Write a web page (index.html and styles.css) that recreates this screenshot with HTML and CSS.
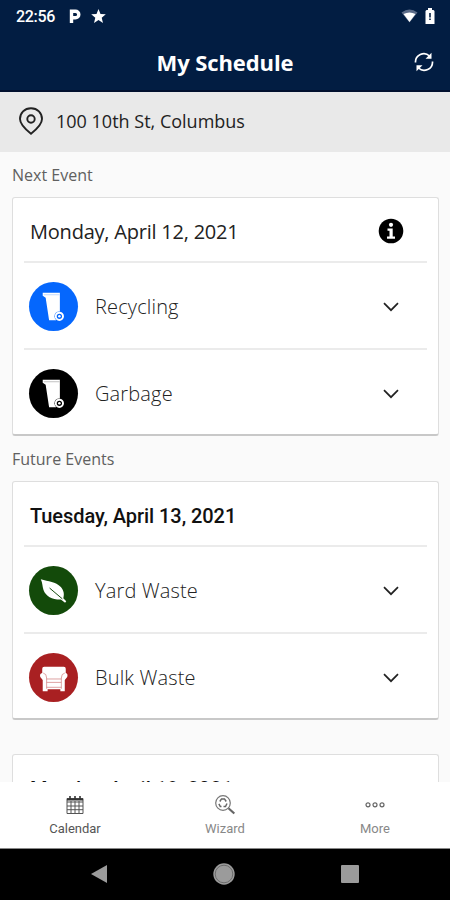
FILE: index.html
```html
<!DOCTYPE html>
<html lang="en">
<head>
  <meta charset="utf-8">
  <meta name="viewport" content="width=device-width, initial-scale=1">
  <title>My Schedule</title>
  <link rel="stylesheet" href="styles.css">
</head>
<body>
<svg class="symbols" width="0" height="0">
  <symbol id="bin" viewBox="0 0 50 50">
    <path d="M14 11h17.500v20l-4 8h-7l-3.500-23-3-2z" fill="#fff"/>
    <path d="M15 13h16" stroke="currentColor" stroke-width=".5" opacity=".5"/>
    <circle cx="31" cy="35" r="5" fill="currentColor"/>
    <circle cx="31" cy="35" r="3.700" fill="none" stroke="#fff" stroke-width="2"/>
    <circle cx="31" cy="35" r="1.300" fill="#fff"/>
  </symbol>
  <symbol id="chevron" viewBox="0 0 16 10">
    <path d="M1 1.200l7 7 7-7" fill="none" stroke="#222" stroke-width="1.700"/>
  </symbol>
</svg>

<div class="app">
  <header class="header">
    <div class="status">
      <span class="time">22:56</span>
      <svg class="parking" width="12" height="14" viewBox="0 0 12 14"><path d="M2.500 14V2.200h4a3.300 3.300 0 0 1 0 6.600H3.500" fill="none" stroke="#fff" stroke-width="3.400"/></svg>
      <svg class="star" width="15" height="14" viewBox="0 0 15 14"><path d="M7.500 0l2 4.900 5.300.4-4.100 3.400 1.300 5.200-4.500-2.800L3 13.900l1.300-5.200L.2 5.300l5.300-.4z" fill="#fff"/></svg>
      <svg class="wifi" width="17" height="14" viewBox="0 0 17 14"><path d="M.5 3.500q8-6 16 0l-8 10z" fill="#5b6b88"/><path d="M2.500 5q6-3.200 12 0l-6 8z" fill="#fff"/></svg>
      <svg class="battery" width="10" height="16" viewBox="0 0 10 16"><path d="M3 0h4v2h1.500l1 1v13H.5V3l1-1H3z" fill="#fff"/><path d="M5 5v4.500M5 10.500v1.500" stroke="#021d42" stroke-width="1.600"/></svg>
    </div>
    <div class="titlebar">
      <h1>My Schedule</h1>
      <svg class="refresh" width="20" height="20" viewBox="0 0 20 20">
        <path d="M1.500 10.500A8.300 8.300 0 0 1 15.500 4M18.500 9.500A8.300 8.300 0 0 1 4.500 16" fill="none" stroke="#fff" stroke-width="1.700"/>
        <path d="M17.500 .8v6h-6zM2.500 19.200v-6h6z" fill="#fff"/>
      </svg>
    </div>
  </header>

  <div class="address">
    <svg width="26" height="28" viewBox="0 0 26 28">
      <path d="M13 1.200C6.500 1.200 2 6 2 12c0 5.500 5 10 11 14.700C19 22 24 17.500 24 12 24 6 19.500 1.200 13 1.200z" fill="none" stroke="#222" stroke-width="1.900"/>
      <circle cx="13" cy="12" r="3.700" fill="none" stroke="#222" stroke-width="1.900"/>
    </svg>
    <span>100 10th St, Columbus</span>
  </div>

  <main class="content">
    <h2 class="label">Next Event</h2>
    <section class="card">
      <div class="date"><span class="day">Monday, April 12, 2021</span>
        <svg class="info" width="26" height="26" viewBox="0 0 26 26">
          <circle cx="13" cy="13" r="12.300" fill="#000"/>
          <circle cx="13" cy="6.800" r="2.100" fill="#fff"/>
          <path d="M9.500 10.500h5.200v8h2.300v2.200H9v-2.200h2.500v-5.800h-2z" fill="#fff"/>
        </svg>
      </div>
      <div class="row">
        <svg class="icon recycling"><use href="#bin"/></svg>
        <span class="name">Recycling</span>
        <svg class="chevron"><use href="#chevron"/></svg>
      </div>
      <div class="row">
        <svg class="icon garbage"><use href="#bin"/></svg>
        <span class="name">Garbage</span>
        <svg class="chevron"><use href="#chevron"/></svg>
      </div>
    </section>

    <h2 class="label">Future Events</h2>
    <section class="card">
      <div class="date bold"><span class="day">Tuesday, April 13, 2021</span></div>
      <div class="row">
        <svg class="icon yard" viewBox="0 0 50 50">
          <path d="M12 13.500c8 2.500 15 2 20.500 8 3.500 4 3.500 8 2.500 11.500l3 3-1.200 1.500-4.300-3.200C24 34.500 17 31 14.800 24.500c-1.300-4-.8-7-2.800-11z" fill="#fff"/>
          <path d="M21 22.500l13 11" stroke="#134a0a" stroke-width="1"/>
        </svg>
        <span class="name">Yard Waste</span>
        <svg class="chevron"><use href="#chevron"/></svg>
      </div>
      <div class="row">
        <svg class="icon bulk" viewBox="0 0 50 50">
          <path d="M13.500 16q0-2 2-2h20q2 0 2 2v4.500q2.500.8 1.500 4l-2.500 3V39h-4.500v-2h-13v2H14V27.500l-2.500-3q-1-3.200 2-4z" fill="#fff"/>
          <path d="M14.500 20.500q3.500.5 3.500 5v11M36.500 20.500q-3.500.5-3.500 5v11M18 26.500h15M18 30h15M18 35h15" fill="none" stroke="#cf7878" stroke-width=".7"/>
        </svg>
        <span class="name">Bulk Waste</span>
        <svg class="chevron"><use href="#chevron"/></svg>
      </div>
    </section>

    <section class="card later">
      <div class="date bold"><span class="day">Monday, April 19, 2021</span></div>
      <div class="row"></div>
    </section>
  </main>

  <nav class="tabs">
    <a class="tab active">
      <svg width="20" height="20" viewBox="0 0 20 20">
        <path d="M2 3.500h16v15H2zM2 7h16M2 11h16M2 14.700h16M6 6v12.500M10 6v12.500M14 6v12.500" fill="none" stroke="#555" stroke-width="1"/>
        <path d="M2 3.500h16v2H2z" fill="#333"/>
        <path d="M5 1v3.500M10 1v3.500M15 1v3.500" stroke="#333" stroke-width="1.600"/>
      </svg>
      <span>Calendar</span>
    </a>
    <a class="tab">
      <svg width="22" height="20" viewBox="0 0 22 20">
        <circle cx="9" cy="8" r="7.300" fill="none" stroke="#777" stroke-width="1.200"/>
        <path d="M5.800 6.500L7.500 3.900h3l1.700 2.600M13 8.500l-1.500 3H9.500M7.500 11.500H6.300L4.900 8.800" fill="none" stroke="#666" stroke-width="1.500"/>
        <path d="M14.500 13.200l5.800 5.300" stroke="#666" stroke-width="2.200"/>
      </svg>
      <span>Wizard</span>
    </a>
    <a class="tab">
      <svg width="20" height="20" viewBox="0 0 20 20">
        <g fill="none" stroke="#666" stroke-width="1.200"><circle cx="3" cy="9.800" r="2"/><circle cx="10" cy="9.800" r="2"/><circle cx="17" cy="9.800" r="2"/></g>
      </svg>
      <span>More</span>
    </a>
  </nav>

  <footer class="system">
    <svg width="16" height="18" viewBox="0 0 16 18"><path d="M16 0v18L0 9z" fill="#9b9b9b"/></svg>
    <svg width="22" height="22" viewBox="0 0 22 22"><circle cx="11" cy="11" r="10.700" fill="#9b9b9b"/><circle cx="11" cy="11" r="8.800" fill="none" stroke="#666" stroke-width=".9"/></svg>
    <svg width="18" height="18" viewBox="0 0 18 18"><rect width="18" height="18" rx="1" fill="#9b9b9b"/></svg>
  </footer>
</div>
</body>
</html>
```
FILE: styles.css
```css
* {
  box-sizing: border-box;
}

body {
  margin: 0;
  font-family: "Open Sans", "Noto Sans", sans-serif;
  background: #fafafa;
  color: #222;
}

svg {
  display: block;
  flex-shrink: 0;
}

.symbols {
  display: none;
}

.app {
  display: flex;
  flex-direction: column;
  height: 900px;
  width: 450px;
  overflow: hidden;
}

.header {
  height: 92px;
  flex-shrink: 0;
  background: #021d42;
  border-bottom: 2px solid #01102e;
  color: #fff;
}

.status {
  display: flex;
  align-items: center;
  height: 32px;
  padding: 0 15px 0 16px;
}

.time {
  width: 53px;
  font: 500 16px Roboto, sans-serif;
  letter-spacing: -0.3px;
}

.star {
  margin-left: 10px;
}

.wifi {
  margin-left: auto;
  margin-right: 7px;
}

.titlebar {
  display: grid;
  grid-template-columns: 1fr auto 1fr;
  align-items: center;
  height: 60px;
  padding: 0 16px;
}

h1 {
  grid-column: 2;
  margin: 0;
  font-size: 22px;
  line-height: 58px;
  font-weight: 700;
  letter-spacing: -0.1px;
}

.refresh {
  justify-self: end;
}

.address {
  display: flex;
  align-items: center;
  gap: 12px;
  height: 60px;
  flex-shrink: 0;
  padding: 0 18px 2px;
  background: #e9e9e9;
  font-size: 18px;
}

.content {
  flex: 1;
  min-height: 0;
  padding: 0 11px 0 12px;
  overflow: hidden;
}

.label {
  margin: 0;
  height: 45px;
  font-size: 16px;
  line-height: 47px;
  font-weight: 400;
  color: #606060;
}

.card {
  height: 239px;
  padding: 0 11px;
  border: 1px solid #dedede;
  border-bottom: 2px solid #c8c8c8;
  border-radius: 3px;
  background: #fff;
}

.later {
  margin-top: 34px;
}

.date {
  display: flex;
  align-items: center;
  justify-content: space-between;
  height: 63px;
  padding: 3px 23px 0 6px;
  font-size: 20px;
  letter-spacing: -0.22px;
}

.bold {
  font-family: Roboto, sans-serif;
  font-weight: 500;
  letter-spacing: -0.06px;
  padding-top: 5px;
  color: #111;
}

.row {
  display: flex;
  align-items: center;
  height: 87px;
  padding: 2px 28px 0 5px;
  border-top: 2px solid #ebebeb;
}

.icon {
  width: 49px;
  height: 49px;
  border-radius: 50%;
}

.recycling {
  background: #0567fd;
  color: #0567fd;
}

.garbage {
  background: #000;
  color: #000;
}

.yard {
  background: #134a0a;
}

.bulk {
  background: #a92022;
}

.name {
  margin-left: 17px;
  font-size: 20px;
  line-height: 25px;
  font-weight: 340;
  letter-spacing: 0.15px;
}

.chevron {
  width: 16px;
  height: 10px;
  margin-left: auto;
}

.tabs {
  display: grid;
  grid-template-columns: repeat(3, 1fr);
  height: 67px;
  flex-shrink: 0;
  background: #fff;
  border-bottom: 1px solid #888;
}

.tab {
  display: flex;
  flex-direction: column;
  align-items: center;
  padding-top: 13px;
  font: 13px/18px Roboto, sans-serif;
  color: #888;
}

.tab span {
  margin-top: 5px;
}

.active {
  color: #555;
}

.system {
  display: flex;
  align-items: center;
  justify-content: space-between;
  height: 51px;
  flex-shrink: 0;
  padding: 0 91px 2px;
  background: #000;
}
```
